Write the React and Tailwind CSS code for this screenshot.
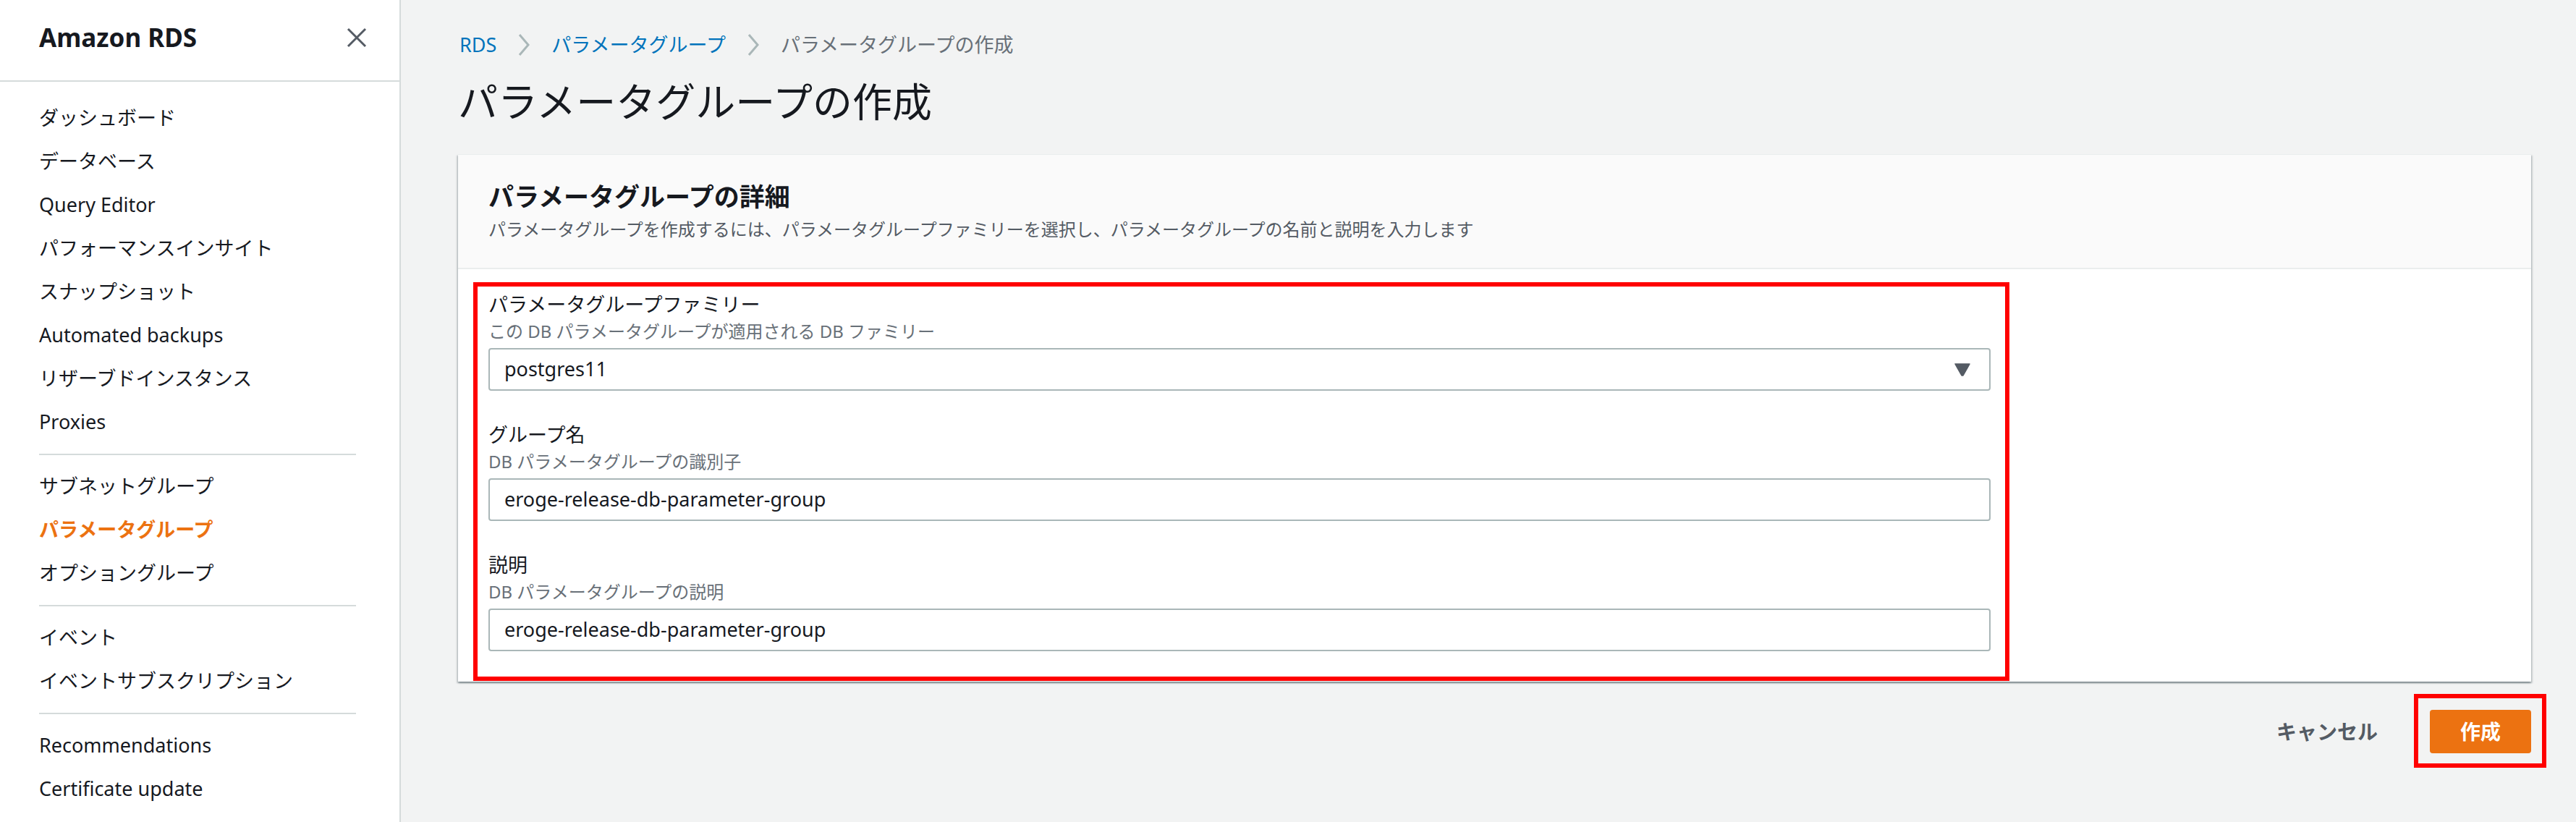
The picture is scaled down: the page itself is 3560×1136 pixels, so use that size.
import React from 'react';

const navGroups = [
  ['ダッシュボード', 'データベース', 'Query Editor', 'パフォーマンスインサイト', 'スナップショット', 'Automated backups', 'リザーブドインスタンス', 'Proxies'],
  ['サブネットグループ', 'パラメータグループ', 'オプショングループ'],
  ['イベント', 'イベントサブスクリプション'],
  ['Recommendations', 'Certificate update'],
];

const fields = [
  { label: 'パラメータグループファミリー', hint: 'この DB パラメータグループが適用される DB ファミリー', value: 'postgres11', select: true },
  { label: 'グループ名', hint: 'DB パラメータグループの識別子', value: 'eroge-release-db-parameter-group' },
  { label: '説明', hint: 'DB パラメータグループの説明', value: 'eroge-release-db-parameter-group' },
];

const Chevron = () => (
  <svg width="20" height="32" viewBox="0 0 20 32" className="mx-[28px] shrink-0">
    <polyline points="4,2 16,16 4,30" fill="none" stroke="#aab7b8" strokeWidth="3" />
  </svg>
);

const Sidebar = () => (
  <aside className="w-[554px] shrink-0 bg-white border-r-2 border-[#d5dbdb] flex flex-col">
    <div className="h-[113px] border-b-2 border-[#d5dbdb] flex items-center justify-between pl-[54px] pr-[45px] pb-[8px]">
      <span className="text-[35px] leading-[44px] font-bold text-[#16191f]">Amazon RDS</span>
      <svg width="28" height="28" viewBox="0 0 28 28">
        <path d="M2 2 L26 26 M26 2 L2 26" stroke="#545b64" strokeWidth="3" />
      </svg>
    </div>
    <nav className="pl-[54px] pr-[60px] pt-[20px]">
      {navGroups.map((group, gi) => (
        <div key={gi}>
          {gi > 0 && <div className="mt-[14px] mb-[13px] h-[2px] bg-[#d5dbdb]" />}
          {group.map((item) => (
            <div
              key={item}
              className={`h-[60px] flex items-center text-[27px] ${item === 'パラメータグループ' ? 'font-bold text-[#ec7211]' : 'text-[#16191f]'}`}
            >
              {item}
            </div>
          ))}
        </div>
      ))}
    </nav>
  </aside>
);

const Field = ({ label, hint, value, select, first }) => (
  <div className={first ? '' : 'mt-[43px]'}>
    <div className="text-[27px] leading-[36px] text-[#16191f]">{label}</div>
    <div className="mt-[4px] text-[24px] leading-[30px] text-[#687078]">{hint}</div>
    <div className="mt-[8px] h-[59px] border-2 border-[#aab7b8] rounded-[4px] bg-white flex items-center justify-between pl-[20px] pr-[26px]">
      <span className="text-[27px] text-[#16191f]">{value}</span>
      {select && (
        <svg width="22" height="18" viewBox="0 0 22 18">
          <path d="M1 1 L21 1 L12 17 L10 17 Z" fill="#545b64" strokeLinejoin="round" stroke="#545b64" strokeWidth="1.5" />
        </svg>
      )}
    </div>
  </div>
);

export default function App() {
  return (
    <div className="flex w-full h-[1136px] font-['Noto_Sans','Noto_Sans_CJK_JP',sans-serif] overflow-hidden">
      <Sidebar />
      <main className="flex-1 bg-[#f2f3f3] pl-[79px] pr-[62px] pt-[44px]">
        <div className="flex items-center h-[36px] text-[27px] pl-[2px]">
          <span className="text-[#0073bb]">RDS</span>
          <Chevron />
          <span className="text-[#0073bb]">パラメータグループ</span>
          <Chevron />
          <span className="text-[#687078]">パラメータグループの作成</span>
        </div>
        <h1 className="mt-[26px] text-[55px] leading-[68px] text-[#16191f]">パラメータグループの作成</h1>

        <section className="mt-[39px] bg-white shadow-[0_2px_2px_0_rgba(0,28,36,0.3),2px_2px_2px_0_rgba(0,28,36,0.15),-2px_2px_2px_0_rgba(0,28,36,0.15)] border-t border-[#eaeded]">
          <div className="bg-[#fafafa] border-b-2 border-[#eaeded] px-[42px] pt-[36px] pb-[38px]">
            <h2 className="text-[35px] leading-[44px] font-bold text-[#16191f]">パラメータグループの詳細</h2>
            <p className="mt-[8px] text-[24px] leading-[30px] text-[#545b64]">
              パラメータグループを作成するには、パラメータグループファミリーを選択し、パラメータグループの名前と説明を入力します
            </p>
          </div>
          <div className="px-[42px] pt-[31px] pb-[42px]">
            <div className="relative w-[2076px]">
              {fields.map((f, i) => (
                <Field key={f.label} {...f} first={i === 0} />
              ))}
              <div className="absolute -left-[21px] -right-[26px] -top-[13px] -bottom-[41px] border-[6px] border-[#ff0000] pointer-events-none" />
            </div>
          </div>
        </section>

        <div className="mt-[39px] flex justify-end items-center">
          <span className="text-[28px] font-bold text-[#545b64] mr-[72px]">キャンセル</span>
          <div className="relative">
            <button className="w-[140px] h-[60px] rounded-[4px] bg-[#ec7211] text-white text-[28px] font-bold flex items-center justify-center">
              作成
            </button>
            <div className="absolute -left-[22px] -right-[21px] -top-[22px] -bottom-[20px] border-[6px] border-[#ff0000] pointer-events-none" />
          </div>
        </div>
      </main>
    </div>
  );
}
